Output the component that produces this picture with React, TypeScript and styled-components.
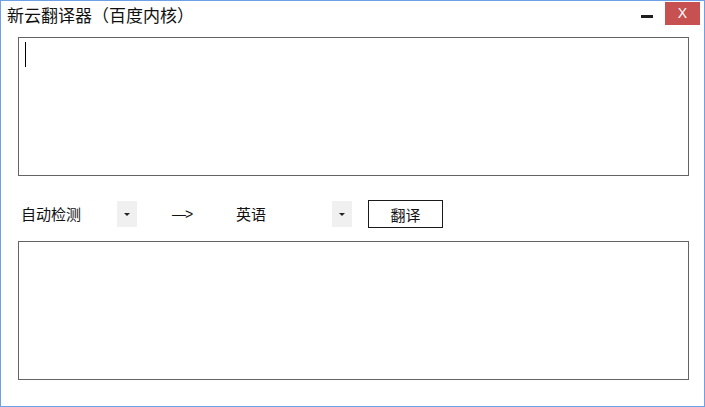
import React from "react";
import styled, { createGlobalStyle } from "styled-components";

const Global = createGlobalStyle`
  html, body { margin: 0; padding: 0; background: #ffffff; }
  body { font-family: "Noto Sans CJK SC", "Microsoft YaHei", sans-serif; }
  * { box-sizing: border-box; }
`;

const Window = styled.div`
  width: 705px;
  height: 407px;
  border: 1px solid #6f9fe4;
  background: #ffffff;
  display: flex;
  flex-direction: column;
  overflow: hidden;
`;

const TitleBar = styled.div`
  height: 36px;
  display: flex;
  align-items: flex-start;
  flex-shrink: 0;
`;

const Title = styled.div`
  margin: 3px 0 0 6px;
  font-size: 17px;
  line-height: 22px;
  color: #111111;
  white-space: nowrap;
`;

const Controls = styled.div`
  margin-left: auto;
  margin-right: 4px;
  margin-top: 1px;
  display: flex;
  gap: 1px;
`;

const MinButton = styled.div`
  width: 35px;
  height: 23px;
  display: flex;
  justify-content: center;
  align-items: flex-start;
  padding-top: 13px;
  &::after {
    content: "";
    display: block;
    width: 12px;
    height: 3px;
    background: #1e1e1e;
  }
`;

const CloseButton = styled.div`
  width: 35px;
  height: 23px;
  background: #c75050;
  color: #ffffff;
  font-family: "Liberation Sans", Arial, sans-serif;
  font-size: 14px;
  line-height: 23px;
  text-align: center;
`;

const Body = styled.div`
  flex: 1;
  display: flex;
  flex-direction: column;
  padding: 0 15px 0 17px;
`;

const TextBox = styled.div`
  height: 139px;
  border: 1px solid #646464;
  background: #ffffff;
  padding: 4px 0 0 6px;
`;

const Caret = styled.div`
  width: 1px;
  height: 25px;
  background: #000000;
`;

const Row = styled.div`
  margin: 24px 0 13px 0;
  height: 28px;
  display: flex;
  align-items: center;
  font-size: 15px;
  color: #111111;
`;

const Select = styled.div<{ $w: number }>`
  width: ${(p) => p.$w}px;
  height: 26px;
  display: flex;
  align-items: center;
`;

const SelectText = styled.div<{ $pad: number }>`
  flex: 1;
  padding-left: ${(p) => p.$pad}px;
  line-height: 20px;
  white-space: nowrap;
`;

const ArrowBox = styled.div`
  width: 20px;
  height: 26px;
  background: #f0f0f0;
  display: flex;
  justify-content: center;
  align-items: center;
  &::after {
    content: "";
    display: block;
    width: 0;
    height: 0;
    border-left: 3px solid transparent;
    border-right: 3px solid transparent;
    border-top: 3px solid #222222;
    margin-left: -1px;
  }
`;

const Arrow = styled.div`
  margin-left: 35px;
  width: 62px;
  font-family: "Liberation Sans", Arial, sans-serif;
  font-size: 14px;
  white-space: nowrap;
  letter-spacing: -1px;
`;

const Button = styled.div`
  margin-left: 16px;
  width: 75px;
  height: 28px;
  border: 1px solid #1a1a1a;
  display: flex;
  justify-content: center;
  align-items: center;
  font-size: 15px;
  background: #ffffff;
`;

export default function App() {
  return (
    <>
      <Global />
      <Window>
        <TitleBar>
          <Title>新云翻译器（百度内核）</Title>
          <Controls>
            <MinButton />
            <CloseButton>X</CloseButton>
          </Controls>
        </TitleBar>
        <Body>
          <TextBox>
            <Caret />
          </TextBox>
          <Row>
            <Select $w={119}>
              <SelectText $pad={3}>自动检测</SelectText>
              <ArrowBox />
            </Select>
            <Arrow>—&gt;</Arrow>
            <Select $w={118}>
              <SelectText $pad={2}>英语</SelectText>
              <ArrowBox />
            </Select>
            <Button>翻译</Button>
          </Row>
          <TextBox />
        </Body>
      </Window>
    </>
  );
}
